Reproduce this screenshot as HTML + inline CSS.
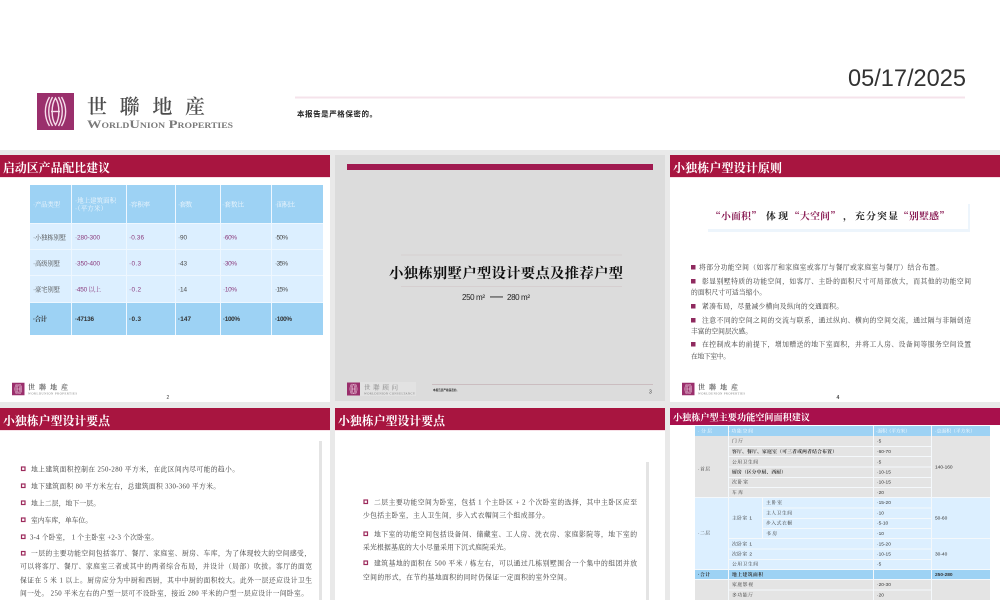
<!DOCTYPE html>
<html lang="zh">
<head>
<meta charset="utf-8">
<title>小独栋别墅户型设计要点</title>
<style>
html,body{margin:0;padding:0;background:#fff;width:1000px;height:600px;overflow:hidden}
svg{display:block}
text{white-space:pre}
.s{font-family:"Liberation Serif","Noto Serif CJK SC",serif}
.n{font-family:"Noto Serif CJK SC",serif}
.a{font-family:"Liberation Sans","Noto Sans CJK SC",sans-serif}
.t{font-family:"Noto Serif CJK SC",serif;font-weight:700;fill:#fff;font-size:11.8px}
.b{font-family:"Liberation Serif","Noto Serif CJK SC",serif;font-size:6.8px;fill:#3c3c3c}
.c{font-family:"Liberation Sans","Noto Serif CJK SC",serif;font-size:6.4px;fill:#4a4a4a}
.h{fill:#f2f8fd}
.p{fill:#8a3a7c}
.d{font-family:"Liberation Sans","Noto Serif CJK SC",serif;font-size:4.8px;fill:#333}
.e{fill:#fff}
</style>
</head>
<body>
<svg width="1000" height="600" viewBox="0 0 1000 600" xmlns="http://www.w3.org/2000/svg">
<defs>
<filter id="f" x="-5%" y="-5%" width="110%" height="110%"><feGaussianBlur stdDeviation="0.38"/></filter>
<symbol id="m" viewBox="0 0 37 37">
<rect width="37" height="37" fill="#9a2f6c"/>
<g fill="none" stroke="#f6dcea" stroke-width="1.4">
<path d="M12.500 4C7 13 7 24 12.500 33"/><path d="M15.500 4C10.500 13 10.500 24 15.500 33"/>
<path d="M24.500 4C30 13 30 24 24.500 33"/><path d="M21.500 4C26.500 13 26.500 24 21.500 33"/>
<path d="M18.500 5C14 12 14 25 18.500 32C23 25 23 12 18.500 5Z"/>
<path d="M14 18.500H23"/>
</g>
</symbol>
</defs>

<rect width="1000" height="150" fill="#fff"/>
<rect y="150" width="1000" height="450" fill="#e9e9e9"/>

<!-- slide backgrounds -->
<rect x="0" y="155" width="330" height="247" fill="#fff"/>
<rect x="335" y="155" width="330" height="246" fill="#dcdcdc"/>
<rect x="670" y="155" width="330" height="247" fill="#fff"/>
<rect x="0" y="408" width="330" height="192" fill="#fff"/>
<rect x="335" y="408" width="330" height="192" fill="#fff"/>
<rect x="670" y="408" width="330" height="192" fill="#fff"/>

<!-- title bars -->
<rect x="0" y="155" width="330" height="22" fill="#a81540"/>
<rect x="670" y="155" width="330" height="22" fill="#a81540"/>
<rect x="0" y="408" width="330" height="22" fill="#a81540"/>
<rect x="335" y="408" width="330" height="22" fill="#a81540"/>
<rect x="670" y="408" width="330" height="17" fill="#a8104c"/>
<g fill="#f7dfe6">
<rect x="0" y="177" width="330" height="1"/>
<rect x="670" y="177" width="330" height="1"/>
<rect x="0" y="430" width="330" height="1"/>
<rect x="335" y="430" width="330" height="1"/>
</g>

<!-- table 1 -->
<rect x="30" y="185" width="293" height="38" fill="#9dd2f4"/>
<rect x="30" y="223" width="293" height="79" fill="#dcefff"/>
<rect x="30" y="302" width="293" height="33" fill="#9dd2f4"/>
<g fill="#eef7ff">
<rect x="71" y="185" width="1" height="150"/><rect x="126" y="185" width="1" height="150"/>
<rect x="175" y="185" width="1" height="150"/><rect x="220" y="185" width="1" height="150"/>
<rect x="271" y="185" width="1" height="150"/>
<rect x="30" y="223" width="293" height="1"/><rect x="30" y="249" width="293" height="1"/>
<rect x="30" y="275" width="293" height="1"/><rect x="30" y="302" width="293" height="1"/>
</g>

<!-- slide 2 decorations -->
<rect x="347" y="164" width="306" height="6" fill="#a01a50"/>
<rect x="401" y="254.500" width="221" height="1" fill="#d6cfd0"/>
<rect x="401" y="286" width="221" height="1" fill="#d6cfd0"/>
<rect x="432" y="384" width="221" height="1" fill="#cbbdc0"/>
<rect x="360" y="382" width="56" height="14" fill="#e2e2e2"/>

<!-- slide 3 quote box -->
<rect x="968" y="204" width="2" height="28" fill="#edf5fc"/>
<rect x="708" y="229" width="262" height="3" fill="#edf5fc"/>

<!-- gray side bars -->
<rect x="319" y="441" width="3" height="159" fill="#e4e4e4"/>
<rect x="646" y="462" width="3" height="138" fill="#e4e4e4"/>

<!-- table 6 -->
<rect x="695" y="426" width="295" height="10" fill="#9dd2f4"/>
<rect x="695" y="436" width="295" height="61" fill="#e4e4e4"/>
<rect x="695" y="497" width="295" height="72" fill="#dcefff"/>
<rect x="695" y="569" width="295" height="10" fill="#9dd2f4"/>
<rect x="695" y="579" width="295" height="21" fill="#e4e4e4"/>
<g fill="#f4f8fb">
<rect x="728" y="426" width="1" height="174"/>
<rect x="873" y="426" width="1" height="174"/>
<rect x="931" y="426" width="1" height="174"/>
<rect x="762" y="497" width="1" height="41"/>
<rect x="729" y="446" width="202" height="1"/><rect x="729" y="456" width="202" height="1"/>
<rect x="729" y="466.500" width="202" height="1"/><rect x="729" y="477" width="202" height="1"/>
<rect x="729" y="487" width="202" height="1"/>
<rect x="695" y="497" width="295" height="1"/>
<rect x="763" y="507.500" width="168" height="1"/><rect x="763" y="518" width="168" height="1"/>
<rect x="763" y="528" width="168" height="1"/>
<rect x="729" y="538" width="261" height="1"/>
<rect x="729" y="548.500" width="202" height="1"/><rect x="729" y="559" width="202" height="1"/>
<rect x="695" y="569" width="295" height="1"/><rect x="695" y="579" width="295" height="1"/>
<rect x="729" y="589.500" width="202" height="1"/>
</g>

<!-- header zone -->
<rect x="295" y="96.500" width="670" height="2" fill="#f5e3eb"/>
<use href="#m" x="37" y="93" width="37" height="37"/>
<use href="#m" x="12" y="382" width="12.500" height="14"/>
<use href="#m" x="347" y="382" width="13" height="14"/>
<use href="#m" x="682" y="382" width="12.500" height="14"/>

<g filter="url(#f)">
<text x="848" y="86" class="a" font-size="24" fill="#333" textLength="118" lengthAdjust="spacingAndGlyphs">05/17/2025</text>
<text x="87" y="113.500" class="n" font-size="20" font-weight="600" fill="#4d4d4d" textLength="118">世聯地産</text>
<text x="87" y="128" class="s" font-size="12" font-weight="700" fill="#7a7a7a" textLength="146" lengthAdjust="spacingAndGlyphs" style="font-variant:small-caps">WorldUnion Properties</text>
<text x="297" y="116.500" class="a" font-size="7.500" font-weight="700" fill="#222" textLength="80">本报告是严格保密的。</text>

<!-- titles -->
<text x="3" y="172" class="t" textLength="107">启动区产品配比建议</text>
<text x="673" y="172" class="t" style="font-size:12px" textLength="109">小独栋户型设计原则</text>
<text x="3" y="425" class="t" textLength="107">小独栋户型设计要点</text>
<text x="338" y="425" class="t" textLength="107">小独栋户型设计要点</text>
<text x="673" y="420.500" class="t" style="font-size:9.100px" textLength="137">小独栋户型主要功能空间面积建议</text>

<!-- table 1 text -->
<text x="33" y="206.500" class="c h" textLength="27">·产品类型</text>
<text x="75" y="202.500" class="c h" textLength="41">·地上建筑面积</text>
<text x="75" y="210.500" class="c h" textLength="32">·（平方米）</text>
<text x="129" y="206.500" class="c h" textLength="21">·容积率</text>
<text x="178" y="206.500" class="c h" textLength="14">·套数</text>
<text x="222" y="206.500" class="c h" textLength="22">·套数比</text>
<text x="275" y="206.500" class="c h" textLength="20">·面积比</text>
<text x="33" y="239.500" class="c" textLength="33">·小独栋别墅</text>
<text x="75" y="239.500" class="c p" textLength="25">·280-300</text>
<text x="129" y="239.500" class="c p" textLength="15">·0.36</text>
<text x="178" y="239.500" class="c" textLength="9">·90</text>
<text x="223" y="239.500" class="c p" textLength="14">·60%</text>
<text x="275" y="239.500" class="c" textLength="13">·50%</text>
<text x="33" y="265.500" class="c" textLength="27">·高级别墅</text>
<text x="75" y="265.500" class="c p" textLength="25">·350-400</text>
<text x="129" y="265.500" class="c p" textLength="12">·0.3</text>
<text x="178" y="265.500" class="c" textLength="9">·43</text>
<text x="223" y="265.500" class="c p" textLength="14">·30%</text>
<text x="275" y="265.500" class="c" textLength="13">·35%</text>
<text x="33" y="291.500" class="c" textLength="27">·豪宅别墅</text>
<text x="75" y="291.500" class="c p" textLength="26">·450 以上</text>
<text x="129" y="291.500" class="c p" textLength="12">·0.2</text>
<text x="178" y="291.500" class="c" textLength="9">·14</text>
<text x="223" y="291.500" class="c p" textLength="14">·10%</text>
<text x="275" y="291.500" class="c" textLength="13">·15%</text>
<g font-weight="700">
<text x="33" y="321" class="c" style="fill:#333" textLength="14">·合计</text>
<text x="75" y="321" class="c" style="fill:#333" textLength="19">·47136</text>
<text x="129" y="321" class="c" style="fill:#333" textLength="12">·0.3</text>
<text x="178" y="321" class="c" style="fill:#333" textLength="13">·147</text>
<text x="223" y="321" class="c" style="fill:#333" textLength="17">·100%</text>
<text x="275" y="321" class="c" style="fill:#333" textLength="17">·100%</text>
</g>

<!-- slide 2 text -->
<text x="389" y="278" class="n" font-size="14.400" font-weight="700" fill="#111" textLength="234">小独栋别墅户型设计要点及推荐户型</text>
<text x="462" y="300" class="a" font-size="8" fill="#222" textLength="23">250 m²</text>
<rect x="490" y="296.500" width="13" height="0.900" fill="#222"/>
<text x="507" y="300" class="a" font-size="8" fill="#222" textLength="23">280 m²</text>
<text x="364" y="389.500" class="n" font-size="6.500" fill="#888" textLength="34">世聯顾问</text>
<text x="364" y="394.500" class="s" font-size="3" fill="#777" textLength="51">WORLDUNION CONSULTANCY</text>
<text x="433" y="391" class="a" font-size="2.600" font-weight="700" fill="#333" textLength="26">本报告是严格保密的。</text>
<text x="649" y="393.500" class="a" font-size="5" fill="#444">3</text>

<!-- small logos -->
<text x="28" y="389.500" class="n" font-size="7" font-weight="600" fill="#555" textLength="40">世聯地産</text>
<text x="28" y="394.500" class="s" font-size="3" fill="#777" textLength="49">WORLDUNION PROPERTIES</text>
<text x="166.500" y="399" class="a" font-size="5" fill="#444">2</text>
<text x="698" y="389.500" class="n" font-size="7" font-weight="600" fill="#555" textLength="40">世聯地産</text>
<text x="698" y="394.500" class="s" font-size="3" fill="#777" textLength="47">WORLDUNION PROPERTIES</text>
<text x="836.500" y="399" class="a" font-size="5" font-weight="700" fill="#444">4</text>

<!-- slide 3 -->
<g font-size="9.800" font-weight="700" class="n">
<text x="711" y="219.500" fill="#8a1f55" textLength="50">“小面积”</text>
<text x="766" y="219.500" fill="#222" textLength="22">体现</text>
<text x="790" y="219.500" fill="#8a1f55" textLength="50">“大空间”</text>
<text x="843" y="219.500" fill="#222" textLength="8">，</text>
<text x="855" y="219.500" fill="#222" textLength="43">充分突显</text>
<text x="899" y="219.500" fill="#8a1f55" textLength="50">“别墅感”</text>
</g>
<rect x="691" y="265" width="4.500" height="4.500" fill="#8f2a5e"/>
<rect x="691" y="279" width="4.500" height="4.500" fill="#8f2a5e"/>
<rect x="691" y="304" width="4.500" height="4.500" fill="#8f2a5e"/>
<rect x="691" y="318" width="4.500" height="4.500" fill="#8f2a5e"/>
<rect x="691" y="342" width="4.500" height="4.500" fill="#8f2a5e"/>
<text x="699" y="269.500" class="b" textLength="244">将部分功能空间（如客厅和家庭室或客厅与餐厅或家庭室与餐厅）结合布置。</text>
<text x="702" y="283.500" class="b" textLength="269">彰显别墅特质的功能空间，如客厅、主卧的面积尺寸可局部放大，而其他的功能空间</text>
<text x="691" y="294.500" class="b" textLength="75">的面积尺寸可适当缩小。</text>
<text x="702" y="308.500" class="b" textLength="141">紧凑布局，尽量减少横向及纵向的交通面积。</text>
<text x="702" y="322.500" class="b" textLength="269">注意不同的空间之间的交流与联系，通过纵向、横向的空间交流，通过隔与非隔创造</text>
<text x="691" y="333.500" class="b" textLength="61">丰富的空间层次感。</text>
<text x="702" y="346.500" class="b" textLength="269">在控制成本的前提下，增加赠送的地下室面积，并将工人房、设备间等服务空间设置</text>
<text x="691" y="358.500" class="b" textLength="39">在地下室中。</text>

<!-- slide 4 -->
<g fill="none" stroke="#9c2a5c" stroke-width="1.200">
<rect x="21.500" y="467" width="3.500" height="3.500"/><rect x="21.500" y="484" width="3.500" height="3.500"/>
<rect x="21.500" y="501" width="3.500" height="3.500"/><rect x="21.500" y="518" width="3.500" height="3.500"/>
<rect x="21.500" y="535" width="3.500" height="3.500"/><rect x="21.500" y="551.500" width="3.500" height="3.500"/>
<rect x="364" y="500" width="3.500" height="3.500"/><rect x="364" y="532" width="3.500" height="3.500"/>
<rect x="364" y="561" width="3.500" height="3.500"/>
</g>
<text x="31" y="471.500" class="b" textLength="208">地上建筑面积控制在 250-280 平方米，在此区间内尽可能的趋小。</text>
<text x="31" y="488.500" class="b" textLength="189">地下建筑面积 80 平方米左右，总建筑面积 330-360 平方米。</text>
<text x="31" y="505.500" class="b" textLength="69">地上二层，地下一层。</text>
<text x="31" y="522.500" class="b" textLength="61">室内车库，单车位。</text>
<text x="30" y="539.500" class="b" textLength="128">3-4 个卧室， 1 个主卧室 +2-3 个次卧室。</text>
<text x="31" y="555.500" class="b" textLength="280">一层的主要功能空间包括客厅、餐厅、家庭室、厨房、车库，为了体现较大的空间感受，</text>
<text x="20" y="568.500" class="b" textLength="292">可以将客厅、餐厅、家庭室三者或其中的两者综合布局，并设计（局部）吹拔。客厅的面宽</text>
<text x="20" y="582.500" class="b" textLength="292">保证在 5 米 1 以上。厨房应分为中厨和西厨，其中中厨的面积较大。此外一层还应设计卫生</text>
<text x="20" y="595.500" class="b" textLength="288">间一处。 250 平米左右的户型一层可不设卧室，接近 280 平米的户型一层应设计一间卧室。</text>

<!-- slide 5 -->
<text x="374" y="504.500" class="b" textLength="263">二层主要功能空间为卧室，包括 1 个主卧区 + 2 个次卧室的选择，其中主卧区应至</text>
<text x="363" y="517.500" class="b" textLength="186">少包括主卧室，主人卫生间，步入式衣帽间三个组成部分。</text>
<text x="374" y="536.500" class="b" textLength="263">地下室的功能空间包括设备间、储藏室、工人房、洗衣房、家庭影院等，地下室的</text>
<text x="363" y="549.500" class="b" textLength="147">采光根据基底的大小尽量采用下沉式庭院采光。</text>
<text x="374" y="565.500" class="b" textLength="263">建筑基地的面积在 500 平米 / 栋左右，可以通过几栋别墅围合一个集中的组团并放</text>
<text x="363" y="579.500" class="b" textLength="208">空间的形式，在节约基地面积的同时仍保证一定面积的室外空间。</text>

<!-- table 6 text -->
<text x="698" y="432.500" class="d e" textLength="14">·分层</text>
<text x="729" y="432.500" class="d e" textLength="24">·功能空间</text>
<text x="876" y="432.500" class="d e" textLength="34">·面积（平方米）</text>
<text x="935" y="432.500" class="d e" textLength="40">·总面积（平方米）</text>
<g>
<text x="732" y="442.500" class="d" textLength="11">门厅</text><text x="877" y="442.500" class="d">·5</text>
<text x="732" y="453" class="d" font-weight="700" textLength="105">客厅、餐厅、家庭室（可三者或两者结合布置）</text><text x="877" y="453" class="d">·60-70</text>
<text x="732" y="463.500" class="d" textLength="26">公用卫生间</text><text x="877" y="463.500" class="d">·5</text>
<text x="732" y="473.500" class="d" font-weight="700" textLength="54">厨房（区分中厨、西厨）</text><text x="877" y="473.500" class="d">·10-15</text>
<text x="732" y="483.500" class="d" textLength="16">次卧室</text><text x="877" y="483.500" class="d">·10-15</text>
<text x="732" y="494" class="d" textLength="11">车库</text><text x="877" y="494" class="d">·20</text>
<text x="766" y="504" class="d" textLength="16">主卧室</text><text x="877" y="504" class="d">·15-20</text>
<text x="766" y="514.500" class="d" textLength="26">主人卫生间</text><text x="877" y="514.500" class="d">·10</text>
<text x="766" y="524.500" class="d" textLength="26">步入式衣橱</text><text x="877" y="524.500" class="d">·5-10</text>
<text x="766" y="535" class="d" textLength="11">书房</text><text x="877" y="535" class="d">·10</text>
<text x="732" y="545.500" class="d" textLength="20">次卧室 1</text><text x="877" y="545.500" class="d">·15-20</text>
<text x="732" y="555.500" class="d" textLength="20">次卧室 2</text><text x="877" y="555.500" class="d">·10-15</text>
<text x="732" y="565.500" class="d" textLength="26">公用卫生间</text><text x="877" y="565.500" class="d">·5</text>
<text x="698" y="576" class="d" font-weight="700" textLength="12">·合计</text>
<text x="732" y="576" class="d" font-weight="700" textLength="31">地上建筑面积</text>
<text x="935" y="576" class="d" font-weight="700">250-280</text>
<text x="732" y="586" class="d" textLength="21">家庭影视</text><text x="877" y="586" class="d">·20-30</text>
<text x="732" y="596.500" class="d" textLength="21">多功能厅</text><text x="877" y="596.500" class="d">·20</text>
<text x="698" y="470.500" class="d" textLength="12">·首层</text>
<text x="698" y="534.500" class="d" textLength="12">·二层</text>
<text x="732" y="519.500" class="d" textLength="20">主卧室 1</text>
<text x="935" y="468.500" class="d">140-160</text>
<text x="935" y="519.500" class="d">50-60</text>
<text x="935" y="555.500" class="d">30-40</text>
</g>
</g>
</svg>
</body>
</html>
